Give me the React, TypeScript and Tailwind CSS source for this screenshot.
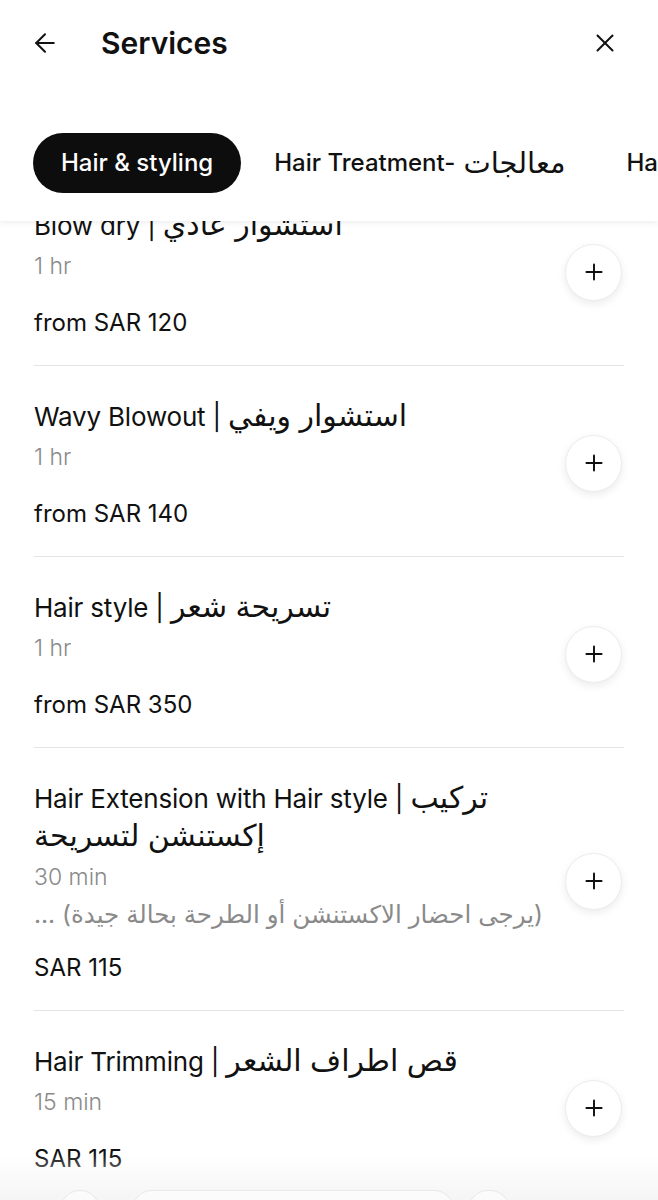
import { ArrowLeft, X, Plus } from "lucide-react"

type Service = {
  title: string
  titleAr: string
  duration: string
  note?: string
  price: string
}

const services: Service[] = [
  { title: "Blow dry |", titleAr: "استشوار عادي", duration: "1 hr", price: "from SAR 120" },
  { title: "Wavy Blowout |", titleAr: "استشوار ويفي", duration: "1 hr", price: "from SAR 140" },
  { title: "Hair style |", titleAr: "تسريحة شعر", duration: "1 hr", price: "from SAR 350" },
  {
    title: "Hair Extension with Hair style |",
    titleAr: "تركيب إكستنشن لتسريحة",
    duration: "30 min",
    note: "(يرجى احضار الاكستنشن أو الطرحة بحالة جيدة) ...",
    price: "SAR 115",
  },
  { title: "Hair Trimming |", titleAr: "قص اطراف الشعر", duration: "15 min", price: "SAR 115" },
]

const tabs = [
  { en: "Hair & styling", ar: "" },
  { en: "Hair Treatment-", ar: "معالجات" },
  { en: "Hair colouring", ar: "" },
]

export default function App() {
  return (
    <div
      className="relative w-[658px] h-[1200px] overflow-hidden bg-white text-[#111]"
      style={{ fontFamily: 'Inter, "DejaVu Sans", "Noto Sans", sans-serif' }}
    >
      {/* Header + category tabs */}
      <div className="relative z-10 bg-white shadow-[0_2px_6px_rgba(0,0,0,0.07)]">
        <div className="h-[86px] flex items-center pl-[30px] pr-[38px]">
          <ArrowLeft size={30} strokeWidth={1.6} className="text-[#111]" />
          <h1 className="ml-[41px] text-[30px] font-semibold">Services</h1>
          <X size={30} strokeWidth={1.6} className="ml-auto text-[#111]" />
        </div>
        <div className="flex gap-[5px] pl-[33px] pt-[47px] pb-[28px] whitespace-nowrap">
          {tabs.map((tab, i) => (
            <div
              key={tab.en}
              className={`h-[60px] px-[28px] flex items-center rounded-full text-[24px] font-medium ${
                i === 0 ? "bg-[#0d0d0d] text-white" : "text-[#111]"
              }`}
            >
              {tab.en}
              {tab.ar && <span className="ml-[8px] text-[29px] font-normal leading-[30px]">{tab.ar}</span>}
            </div>
          ))}
        </div>
      </div>

      {/* Service list (scrolled) */}
      <div className="mx-[34px] -mt-[46px]">
        {services.map((s) => (
          <div key={s.title} className="flex items-center border-b border-[#e4e4e4] pt-[31px] pb-[27px]">
            <div className="flex-1 min-w-0 pr-[20px]">
              <div className="pr-[10px] text-[26px] leading-[37px] tracking-[-0.2px]">
                {s.title} <span className="text-[30px] leading-[37px] tracking-normal">{s.titleAr}</span>
              </div>
              <div className="mt-[7px] text-[23px] leading-[30px] font-light text-[#8a8a8a]">{s.duration}</div>
              {s.note && (
                <div dir="rtl" className="mt-[7px] text-left text-[24.5px] leading-[30px] text-[#8a8a8a] whitespace-nowrap">
                  {s.note}
                </div>
              )}
              <div className={`${s.note ? "mt-[24px]" : "mt-[27px]"} text-[24px] leading-[30px]`}>{s.price}</div>
            </div>
            <button className="w-[57px] h-[57px] shrink-0 mr-[2px] rounded-full bg-white border border-[#ececec] shadow-[0_3px_8px_rgba(0,0,0,0.08)] flex items-center justify-center">
              <Plus size={26} strokeWidth={1.8} className="text-[#111]" />
            </button>
          </div>
        ))}
      </div>

      {/* Bottom fade with partially visible action bar */}
      <div className="absolute bottom-0 left-0 right-0 h-[46px] bg-gradient-to-b from-white/0 to-[#f5f5f5]">
        <div className="flex items-start gap-[14px] pl-[60px] pt-[36px]">
          <div className="w-[40px] h-[40px] rounded-full border border-[#e8e8e8] bg-white/60" />
          <div className="w-[322px] h-[40px] rounded-[20px] border border-[#e8e8e8] bg-white/60 ml-[18px]" />
          <div className="w-[42px] h-[40px] rounded-full border border-[#e8e8e8] bg-white/60" />
        </div>
      </div>
    </div>
  )
}
